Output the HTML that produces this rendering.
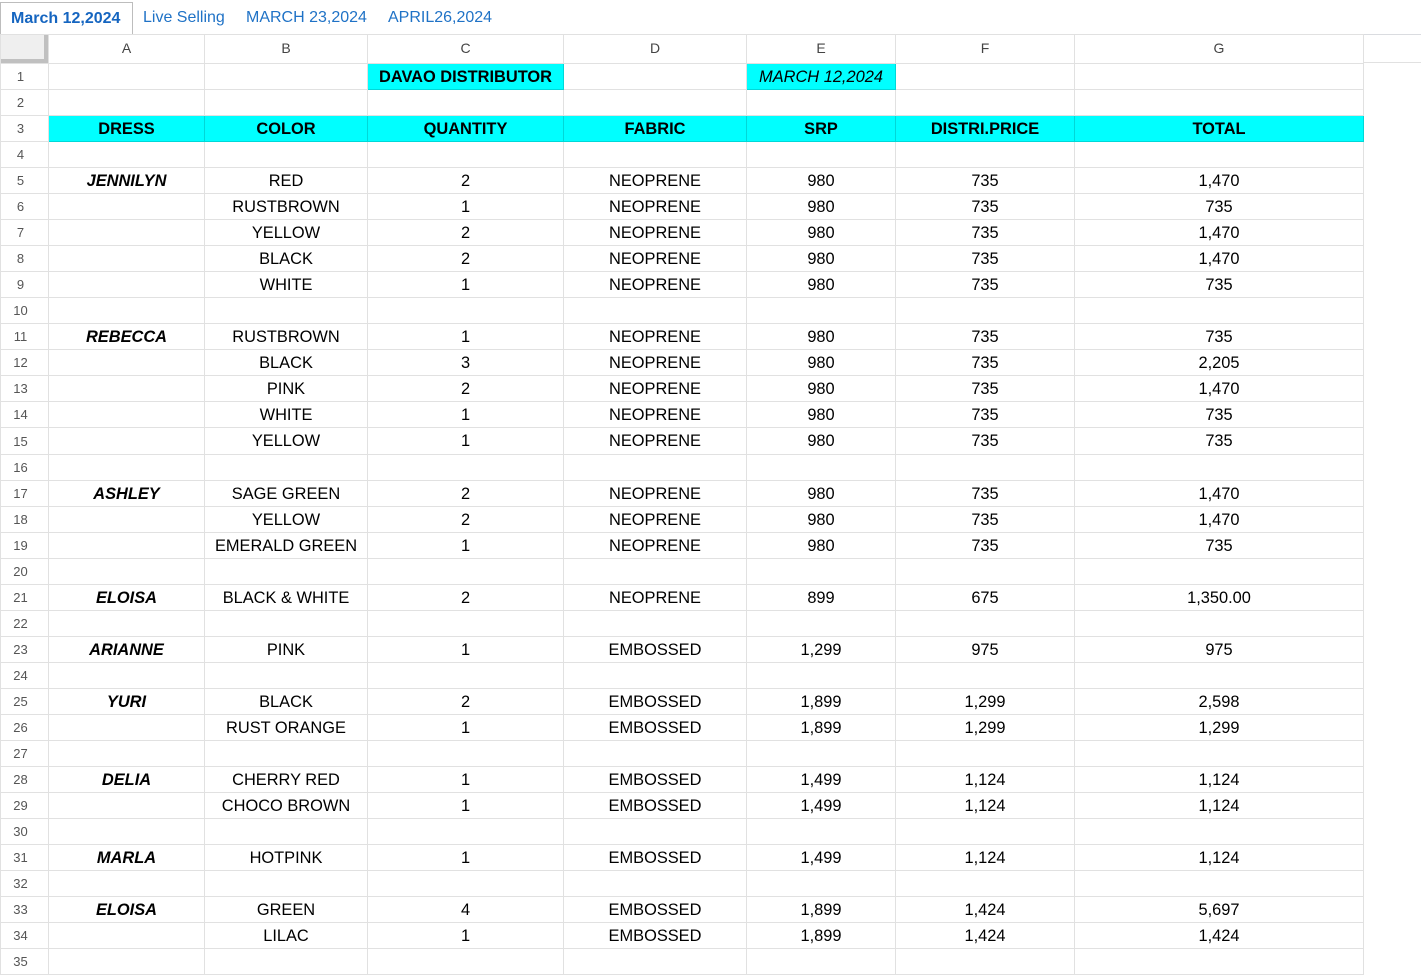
<!DOCTYPE html>
<html><head><meta charset="utf-8"><style>
body{margin:0;width:1421px;height:951px;overflow:hidden;background:#fff;font-family:"Liberation Sans",Arial,sans-serif;position:relative}
.tabs{position:absolute;left:0;top:0;width:1421px;height:35px;border-bottom:1px solid #dadce0;box-sizing:border-box}
.tab{position:absolute;top:9px;font-size:16px;color:#1f72c6}
.act{position:absolute;left:0;top:2px;width:133px;height:33px;border:1px solid #bdbdbd;border-bottom:none;box-sizing:border-box;background:#fff;font-weight:bold;font-size:16px;color:#1565c0;padding:7px 0 0 10px}
table{position:absolute;left:0;top:34px;border-collapse:collapse;table-layout:fixed}
td{border:1px solid #e1e1e1;padding:0;font-size:16.4px;text-align:center;color:#000;overflow:hidden;white-space:nowrap;padding-top:1px;box-sizing:border-box}
td.rh{font-size:13px;color:#555;background:#fff;padding-right:8px;padding-top:0}
tr.ch td{font-size:14px;color:#444;height:29px;padding-top:0;padding-bottom:3px}
td.corner{background:#efefef;box-shadow:inset -4px -4px 0 #c0c0c0}
.cy{background:#00ffff;border-color:#00d8d8}
.b{font-weight:bold}
.bi{font-weight:bold;font-style:italic}
tr{height:26px}
.after{position:absolute;left:1363px;top:34px;width:58px;height:29px;border-bottom:1px solid #e1e1e1;box-sizing:border-box}
</style></head><body>
<div class="tabs">
<div class="act">March 12,2024</div>
<div class="tab" style="left:143px">Live Selling</div>
<div class="tab" style="left:246px">MARCH 23,2024</div>
<div class="tab" style="left:388px">APRIL26,2024</div>
</div>
<div class="after"></div>
<table>
<colgroup><col style="width:48px"><col style="width:156px"><col style="width:163px"><col style="width:196px"><col style="width:183px"><col style="width:149px"><col style="width:179px"><col style="width:289px"></colgroup>
<tr class="ch" style="height:29px"><td class="corner"></td><td>A</td><td>B</td><td>C</td><td>D</td><td>E</td><td>F</td><td>G</td></tr>
<tr><td class="rh">1</td><td></td><td></td><td class="cy b">DAVAO DISTRIBUTOR</td><td></td><td class="cy" style="font-style:italic">MARCH 12,2024</td><td></td><td></td></tr>
<tr><td class="rh">2</td><td></td><td></td><td></td><td></td><td></td><td></td><td></td></tr>
<tr><td class="rh">3</td><td class="cy b">DRESS</td><td class="cy b">COLOR</td><td class="cy b">QUANTITY</td><td class="cy b">FABRIC</td><td class="cy b">SRP</td><td class="cy b">DISTRI.PRICE</td><td class="cy b">TOTAL</td></tr>
<tr><td class="rh">4</td><td></td><td></td><td></td><td></td><td></td><td></td><td></td></tr>
<tr><td class="rh">5</td><td class="bi">JENNILYN</td><td>RED</td><td>2</td><td>NEOPRENE</td><td>980</td><td>735</td><td>1,470</td></tr>
<tr><td class="rh">6</td><td></td><td>RUSTBROWN</td><td>1</td><td>NEOPRENE</td><td>980</td><td>735</td><td>735</td></tr>
<tr><td class="rh">7</td><td></td><td>YELLOW</td><td>2</td><td>NEOPRENE</td><td>980</td><td>735</td><td>1,470</td></tr>
<tr><td class="rh">8</td><td></td><td>BLACK</td><td>2</td><td>NEOPRENE</td><td>980</td><td>735</td><td>1,470</td></tr>
<tr><td class="rh">9</td><td></td><td>WHITE</td><td>1</td><td>NEOPRENE</td><td>980</td><td>735</td><td>735</td></tr>
<tr><td class="rh">10</td><td></td><td></td><td></td><td></td><td></td><td></td><td></td></tr>
<tr><td class="rh">11</td><td class="bi">REBECCA</td><td>RUSTBROWN</td><td>1</td><td>NEOPRENE</td><td>980</td><td>735</td><td>735</td></tr>
<tr><td class="rh">12</td><td></td><td>BLACK</td><td>3</td><td>NEOPRENE</td><td>980</td><td>735</td><td>2,205</td></tr>
<tr><td class="rh">13</td><td></td><td>PINK</td><td>2</td><td>NEOPRENE</td><td>980</td><td>735</td><td>1,470</td></tr>
<tr><td class="rh">14</td><td></td><td>WHITE</td><td>1</td><td>NEOPRENE</td><td>980</td><td>735</td><td>735</td></tr>
<tr style="height:27px"><td class="rh">15</td><td></td><td>YELLOW</td><td>1</td><td>NEOPRENE</td><td>980</td><td>735</td><td>735</td></tr>
<tr><td class="rh">16</td><td></td><td></td><td></td><td></td><td></td><td></td><td></td></tr>
<tr><td class="rh">17</td><td class="bi">ASHLEY</td><td>SAGE GREEN</td><td>2</td><td>NEOPRENE</td><td>980</td><td>735</td><td>1,470</td></tr>
<tr><td class="rh">18</td><td></td><td>YELLOW</td><td>2</td><td>NEOPRENE</td><td>980</td><td>735</td><td>1,470</td></tr>
<tr><td class="rh">19</td><td></td><td>EMERALD GREEN</td><td>1</td><td>NEOPRENE</td><td>980</td><td>735</td><td>735</td></tr>
<tr><td class="rh">20</td><td></td><td></td><td></td><td></td><td></td><td></td><td></td></tr>
<tr><td class="rh">21</td><td class="bi">ELOISA</td><td>BLACK &amp; WHITE</td><td>2</td><td>NEOPRENE</td><td>899</td><td>675</td><td>1,350.00</td></tr>
<tr><td class="rh">22</td><td></td><td></td><td></td><td></td><td></td><td></td><td></td></tr>
<tr><td class="rh">23</td><td class="bi">ARIANNE</td><td>PINK</td><td>1</td><td>EMBOSSED</td><td>1,299</td><td>975</td><td>975</td></tr>
<tr><td class="rh">24</td><td></td><td></td><td></td><td></td><td></td><td></td><td></td></tr>
<tr><td class="rh">25</td><td class="bi">YURI</td><td>BLACK</td><td>2</td><td>EMBOSSED</td><td>1,899</td><td>1,299</td><td>2,598</td></tr>
<tr><td class="rh">26</td><td></td><td>RUST ORANGE</td><td>1</td><td>EMBOSSED</td><td>1,899</td><td>1,299</td><td>1,299</td></tr>
<tr><td class="rh">27</td><td></td><td></td><td></td><td></td><td></td><td></td><td></td></tr>
<tr><td class="rh">28</td><td class="bi">DELIA</td><td>CHERRY RED</td><td>1</td><td>EMBOSSED</td><td>1,499</td><td>1,124</td><td>1,124</td></tr>
<tr><td class="rh">29</td><td></td><td>CHOCO BROWN</td><td>1</td><td>EMBOSSED</td><td>1,499</td><td>1,124</td><td>1,124</td></tr>
<tr><td class="rh">30</td><td></td><td></td><td></td><td></td><td></td><td></td><td></td></tr>
<tr><td class="rh">31</td><td class="bi">MARLA</td><td>HOTPINK</td><td>1</td><td>EMBOSSED</td><td>1,499</td><td>1,124</td><td>1,124</td></tr>
<tr><td class="rh">32</td><td></td><td></td><td></td><td></td><td></td><td></td><td></td></tr>
<tr><td class="rh">33</td><td class="bi">ELOISA</td><td>GREEN</td><td>4</td><td>EMBOSSED</td><td>1,899</td><td>1,424</td><td>5,697</td></tr>
<tr><td class="rh">34</td><td></td><td>LILAC</td><td>1</td><td>EMBOSSED</td><td>1,899</td><td>1,424</td><td>1,424</td></tr>
<tr><td class="rh">35</td><td></td><td></td><td></td><td></td><td></td><td></td><td></td></tr>
</table>
</body></html>
